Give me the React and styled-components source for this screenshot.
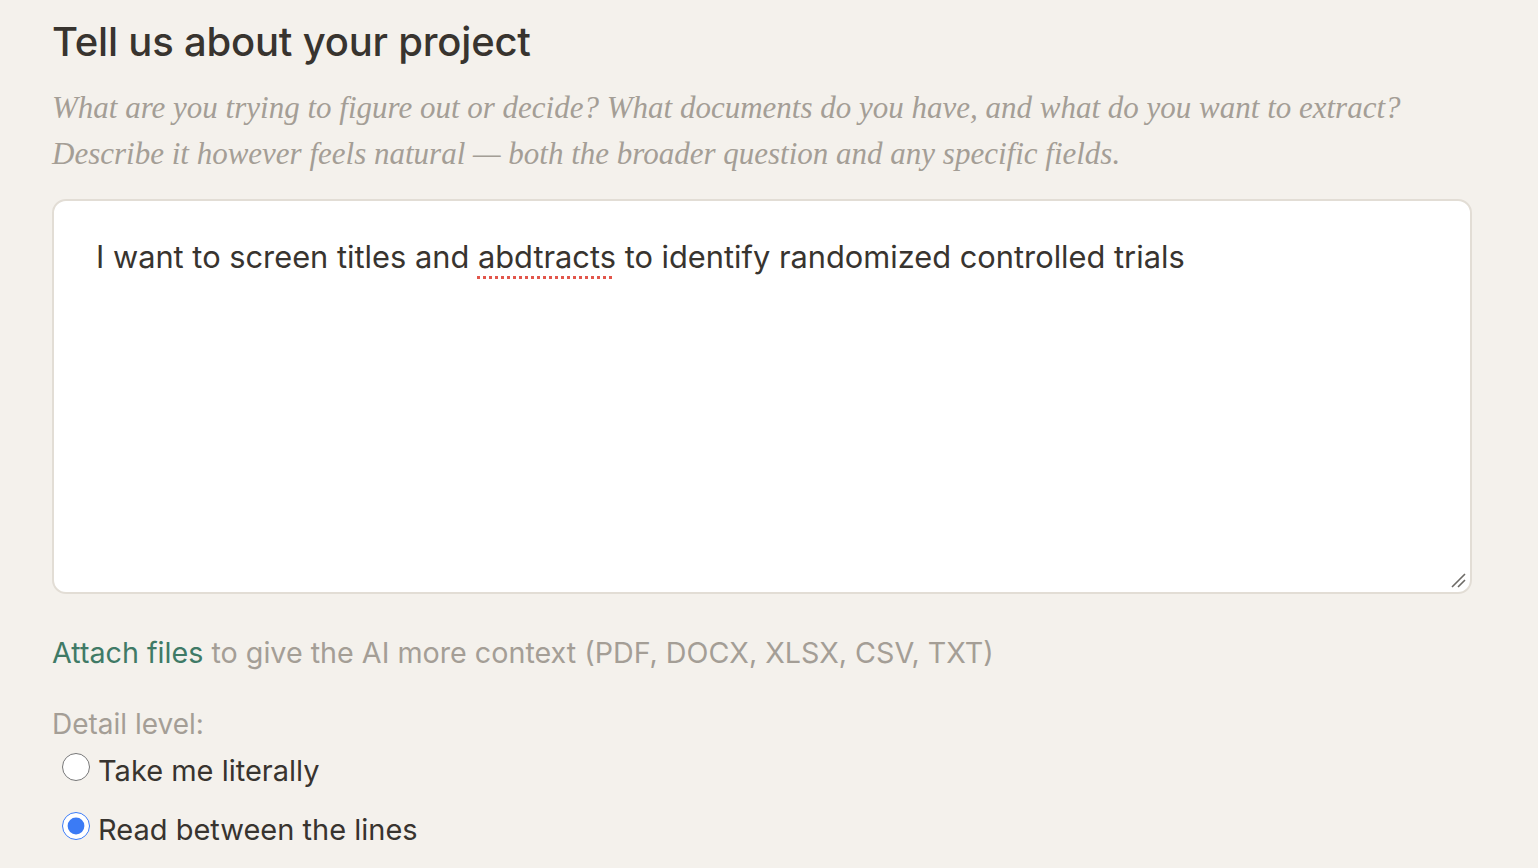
import React, { useState } from "react";
import styled, { createGlobalStyle } from "styled-components";

const Global = createGlobalStyle`
  html, body {
    margin: 0;
    background: #f4f1ec;
  }
  body {
    font-family: Inter, "Noto Sans", sans-serif;
    color: #38342f;
  }
`;

const Page = styled.main`
  padding: 14px 66px 0 52px;
`;

const Title = styled.h1`
  margin: 0;
  font-size: 40px;
  font-weight: 500;
  line-height: 56px;
  letter-spacing: -0.2px;
  color: #38342f;
`;

const Hint = styled.p`
  margin: 15px 0 0;
  font-family: "Liberation Serif", "DejaVu Serif", serif;
  font-style: italic;
  font-size: 31px;
  line-height: 46px;
  color: #a49e96;
`;

const Box = styled.div`
  position: relative;
  box-sizing: border-box;
  margin-top: 22px;
  height: 395px;
  padding: 35px 42px;
  background: #fff;
  border: 2px solid #e2ddd5;
  border-radius: 14px;
  font-size: 30.8px;
  line-height: 42px;
  color: #38342f;
  outline: none;
`;

const Misspelled = styled.span`
  text-decoration: underline dotted #e2564b;
  text-decoration-thickness: 3px;
  text-underline-offset: 8px;
`;

const Grip = styled.svg`
  position: absolute;
  right: 4px;
  bottom: 4px;
`;

const Attach = styled.p`
  margin: 39px 0 0;
  font-size: 28.7px;
  line-height: 40px;
  color: #a49e96;
`;

const Link = styled.a`
  color: #3f7a66;
  text-decoration: none;
  cursor: pointer;
`;

const Label = styled.div`
  margin-top: 33px;
  font-size: 28px;
  line-height: 36px;
  color: #a49e96;
`;

const Options = styled.div`
  display: flex;
  flex-direction: column;
  gap: 19px;
  margin-top: 9px;
  padding-left: 10px;
`;

const Option = styled.label`
  display: flex;
  align-items: center;
  gap: 8px;
  font-size: 29px;
  line-height: 40px;
  color: #38342f;
  cursor: pointer;
`;

const Radio = styled.input`
  margin: 0;
  width: 28px;
  height: 28px;
  accent-color: #3b7bf5;
  transform: translateY(-4px);
`;

export default function App() {
  const [level, setLevel] = useState("lines");
  return (
    <>
      <Global />
      <Page>
        <Title>Tell us about your project</Title>
        <Hint>
          What are you trying to figure out or decide? What documents do you have, and what do you want to extract?
          <br />
          Describe it however feels natural — both the broader question and any specific fields.
        </Hint>
        <Box contentEditable suppressContentEditableWarning role="textbox" aria-multiline="true">
          I want to screen titles and <Misspelled>abdtracts</Misspelled> to identify randomized controlled trials
          <Grip width="16" height="16" viewBox="0 0 16 16" contentEditable={false}>
            <path d="M2 15 L15 2 M8 15 L15 8" stroke="#6d6a66" strokeWidth="1.6" />
          </Grip>
        </Box>
        <Attach>
          <Link>Attach files</Link> to give the AI more context (PDF, DOCX, XLSX, CSV, TXT)
        </Attach>
        <Label>Detail level:</Label>
        <Options>
          <Option>
            <Radio type="radio" name="level" checked={level === "literal"} onChange={() => setLevel("literal")} />
            Take me literally
          </Option>
          <Option>
            <Radio type="radio" name="level" checked={level === "lines"} onChange={() => setLevel("lines")} />
            Read between the lines
          </Option>
        </Options>
      </Page>
    </>
  );
}
